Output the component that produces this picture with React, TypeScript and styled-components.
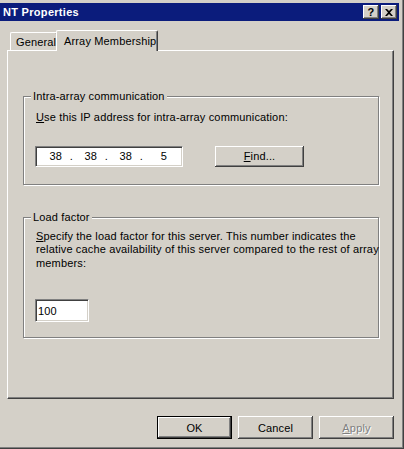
import React from 'react'
import styled, { createGlobalStyle } from 'styled-components'

const GlobalStyle = createGlobalStyle`
  body {
    margin: 0;
    background: #d4d0c8;
  }
  * {
    box-sizing: border-box;
  }
`

const raised = `
  box-shadow: inset -1px -1px #404040, inset 1px 1px #ffffff, inset -2px -2px #808080, inset 2px 2px #d4d0c8;
`

const sunken = `
  border-top: 1px solid #808080;
  border-left: 1px solid #808080;
  border-right: 1px solid #ffffff;
  border-bottom: 1px solid #ffffff;
  box-shadow: inset 1px 1px #404040, inset -1px -1px #d4d0c8;
`

const Window = styled.div`
  width: 404px;
  height: 449px;
  display: flex;
  flex-direction: column;
  padding: 3px 4px 0 0;
  background: #d4d0c8;
  border-right: 1px solid #404040;
  border-bottom: 1px solid #404040;
  box-shadow: inset -1px -1px #808080;
  font-family: "Liberation Sans", Arial, sans-serif;
  font-size: 11px;
  letter-spacing: 0.15px;
  color: #000000;
`

const TitleBar = styled.div`
  height: 18px;
  display: flex;
  align-items: center;
  padding: 0 2px 0 3px;
  background: #0b1c7c;
  color: #ffffff;
  font-weight: bold;
  letter-spacing: 0.3px;
`

const TitleText = styled.span`
  flex: 1;
`

const CaptionButton = styled.div<{ $gap?: boolean }>`
  width: 16px;
  height: 14px;
  margin-left: ${p => (p.$gap ? '2px' : '0')};
  display: flex;
  align-items: center;
  justify-content: center;
  background: #d4d0c8;
  color: #000000;
  font-size: 11px;
  font-weight: bold;
  ${raised}
`

const Body = styled.div`
  flex: 1;
  display: flex;
  flex-direction: column;
  padding: 9px 5px 0 7px;
`

const TabRow = styled.div`
  height: 21px;
  margin-bottom: -1px;
  display: flex;
  align-items: flex-end;
  padding-left: 3px;
  position: relative;
  z-index: 1;
`

const Tab = styled.div<{ $active?: boolean }>`
  height: ${p => (p.$active ? '21px' : '18px')};
  width: ${p => (p.$active ? '102px' : '48px')};
  margin: ${p => (p.$active ? '0 -2px 0 -2px' : '0 0 1px 0')};
  padding-top: ${p => (p.$active ? '4px' : '3px')};
  padding-left: ${p => (p.$active ? '7px' : '5px')};
  background: #d4d0c8;
  border-top: 1px solid #ffffff;
  border-left: 1px solid #ffffff;
  border-right: 1px solid #404040;
  border-top-left-radius: 2px;
  border-top-right-radius: 2px;
  box-shadow: inset -1px 0 #808080;
  white-space: nowrap;
  position: relative;
  z-index: ${p => (p.$active ? 2 : 1)};
`

const Panel = styled.div`
  height: 349px;
  display: flex;
  flex-direction: column;
  padding: 0 14px 0 15px;
  border-top: 1px solid #ffffff;
  border-left: 1px solid #ffffff;
  border-right: 1px solid #404040;
  border-bottom: 1px solid #404040;
  box-shadow: inset -1px -1px #808080;
`

const Group = styled.div<{ $top: number; $pad: string }>`
  position: relative;
  margin-top: ${p => p.$top}px;
  padding: ${p => p.$pad};
  border: 1px solid #808080;
  box-shadow: inset 1px 1px #ffffff, 1px 1px #ffffff;
`

const Legend = styled.span`
  position: absolute;
  top: -7px;
  left: 7px;
  padding: 0 2px;
  line-height: 13px;
  background: #d4d0c8;
`

const Text = styled.div`
  line-height: 13.5px;
  white-space: nowrap;
`

const Key = styled.span`
  text-decoration: underline;
`

const IpRow = styled.div`
  margin-top: 21px;
  display: flex;
  align-items: center;
`

const IpBox = styled.div`
  width: 148px;
  height: 21px;
  margin-left: -1px;
  display: flex;
  align-items: center;
  padding-left: 3px;
  background: #ffffff;
  ${sunken}
`

const Octet = styled.span`
  width: 23px;
  text-align: right;
`

const Dot = styled.span`
  width: 12px;
  text-align: right;
  padding-right: 1px;
`

const PushButton = styled.div<{ $w: number; $h: number; $default?: boolean; $disabled?: boolean }>`
  width: ${p => p.$w}px;
  height: ${p => p.$h}px;
  display: flex;
  align-items: center;
  justify-content: center;
  background: #d4d0c8;
  color: ${p => (p.$disabled ? '#808080' : '#000000')};
  text-shadow: ${p => (p.$disabled ? '1px 1px 0 #ffffff' : 'none')};
  ${p =>
    p.$default
      ? `border: 1px solid #000000;
         box-shadow: inset -1px -1px #404040, inset 1px 1px #ffffff, inset -2px -2px #808080;`
      : raised}
`

const FindButton = styled(PushButton)`
  margin-left: 32px;
`

const LoadInput = styled.div`
  width: 54px;
  height: 23px;
  margin: 29px 0 0 -1px;
  display: flex;
  align-items: center;
  padding-left: 2px;
  background: #ffffff;
  ${sunken}
`

const ButtonRow = styled.div`
  margin-top: 17px;
  display: flex;
  justify-content: flex-end;
  gap: 6px;
`

export default function App() {
  return (
    <Window>
      <GlobalStyle />
      <TitleBar>
        <TitleText>NT Properties</TitleText>
        <CaptionButton>?</CaptionButton>
        <CaptionButton $gap>
          <svg width="8" height="7" viewBox="0 0 8 7">
            <path d="M0 0h2l2 2 2-2h2L5 3.5 8 7H6L4 5 2 7H0l3-3.5z" fill="#000" />
          </svg>
        </CaptionButton>
      </TitleBar>
      <Body>
        <TabRow>
          <Tab>General</Tab>
          <Tab $active>Array Membership</Tab>
        </TabRow>
        <Panel>
          <Group $top={45} $pad="14px 10px 17px 12px">
            <Legend>Intra-array communication</Legend>
            <Text>
              <Key>U</Key>se this IP address for intra-array communication:
            </Text>
            <IpRow>
              <IpBox>
                <Octet>38</Octet>
                <Dot>.</Dot>
                <Octet>38</Octet>
                <Dot>.</Dot>
                <Octet>38</Octet>
                <Dot>.</Dot>
                <Octet>5</Octet>
              </IpBox>
              <FindButton $w={89} $h={21}>
                <span>
                  <Key>F</Key>ind...
                </span>
              </FindButton>
            </IpRow>
          </Group>
          <Group $top={32} $pad="12px 10px 15px 12px">
            <Legend>Load factor</Legend>
            <Text>
              <Key>S</Key>pecify the load factor for this server. This number indicates the
              <br />
              relative cache availability of this server compared to the rest of array
              <br />
              members:
            </Text>
            <LoadInput>100</LoadInput>
          </Group>
        </Panel>
        <ButtonRow>
          <PushButton $w={75} $h={23} $default>OK</PushButton>
          <PushButton $w={75} $h={23}>Cancel</PushButton>
          <PushButton $w={75} $h={23} $disabled>
            <span>
              <Key>A</Key>pply
            </span>
          </PushButton>
        </ButtonRow>
      </Body>
    </Window>
  )
}
